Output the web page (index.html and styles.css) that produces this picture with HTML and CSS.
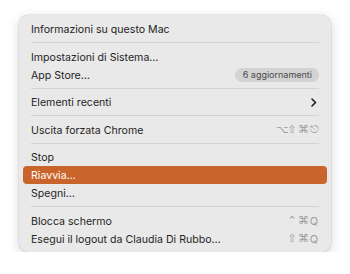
FILE: index.html
```html
<!DOCTYPE html>
<html lang="it">
<head>
<meta charset="utf-8">
<link rel="stylesheet" href="styles.css">
</head>
<body>
<div class="menu">
  <div class="item"><span class="label">Informazioni su questo Mac</span></div>
  <div class="sep"></div>
  <div class="item"><span class="label">Impostazioni di Sistema…</span></div>
  <div class="item"><span class="label">App Store…</span><span class="badge">6 aggiornamenti</span></div>
  <div class="sep"></div>
  <div class="item"><span class="label">Elementi recenti</span>
    <svg class="chev" width="6" height="9" viewBox="0 0 6 9"><path d="M1 1 L4.5 4.5 L1 8" fill="none" stroke="#1e1e1e" stroke-width="1.6" stroke-linecap="round" stroke-linejoin="round"/></svg>
  </div>
  <div class="sep"></div>
  <div class="item"><span class="label">Uscita forzata Chrome</span><span class="keys"><span>⌥</span><span>⇧</span><span>⌘</span><span>⎋</span></span></div>
  <div class="sep"></div>
  <div class="item"><span class="label">Stop</span></div>
  <div class="item active"><span class="label">Riavvia…</span></div>
  <div class="item"><span class="label">Spegni…</span></div>
  <div class="sep"></div>
  <div class="item"><span class="label">Blocca schermo</span><span class="keys"><span>⌃</span><span>⌘</span><span class="q">Q</span></span></div>
  <div class="item"><span class="label">Esegui il logout da Claudia Di Rubbo…</span><span class="keys"><span>⇧</span><span>⌘</span><span class="q">Q</span></span></div>
</div>
</body>
</html>
```
FILE: styles.css
```css
html, body {
  margin: 0;
  padding: 0;
  background: #ffffff;
}
body {
  padding: 15px 19px 0 19px;
  font-family: Inter, "Noto Sans", sans-serif;
}
.menu {
  width: 312px;
  box-sizing: border-box;
  background: #e9e9e9;
  border-radius: 9px;
  padding: 5px 4px 4px 4px;
  box-shadow: 0 0 0 0.5px rgba(0,0,0,0.12), 0 3px 12px rgba(0,0,0,0.16);
}
.item {
  height: 18px;
  display: flex;
  align-items: center;
  justify-content: space-between;
  padding: 0 8px;
  border-radius: 4px;
  font-size: 10.6px;
  color: #252525;
}
.label {
  position: relative;
  top: 0.5px;
}
.item.active {
  background: #c9652a;
  color: #ffffff;
}
.sep {
  height: 9.5px;
  display: flex;
  align-items: center;
  margin: 0 8px;
}
.sep::before {
  content: "";
  flex: 1;
  height: 1px;
  background: #d3d3d3;
}
.badge {
  font-size: 9px;
  color: #4a4a4a;
  background: #d3d3d3;
  border-radius: 7px;
  height: 14px;
  line-height: 14px;
  padding: 0 7px 0 8px;
}
.chev {
  margin-right: 2px;
}
.keys {
  display: flex;
  gap: 1px;
  color: #9d9d9d;
  font-family: "DejaVu Sans", sans-serif;
  font-size: 11px;
}
.keys span {
  width: 10px;
  text-align: center;
}
.keys .q {
  font-family: Inter, sans-serif;
  font-size: 11px;
}
```
